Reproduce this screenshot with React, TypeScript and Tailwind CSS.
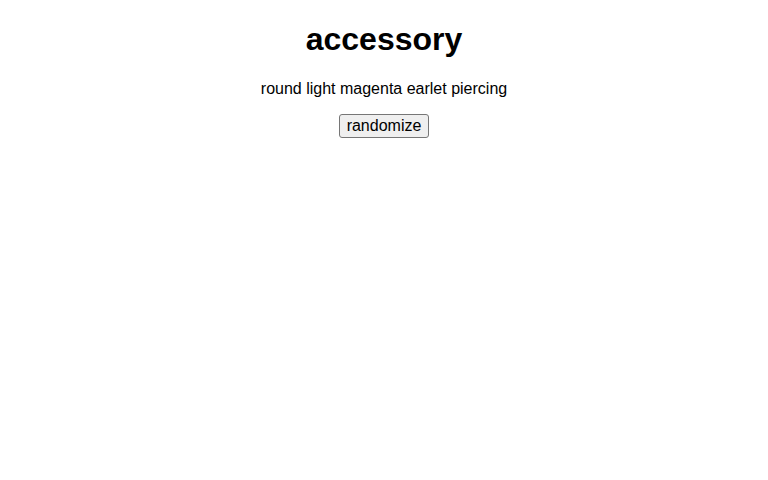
import React, { useState } from "react";

const items = [
  "round light magenta earlet piercing",
  "small silver hoop nose ring",
  "braided leather wrist band",
  "oval dark green brooch pin",
];

export default function App() {
  const [text, setText] = useState(items[0]);

  function randomize() {
    setText(items[Math.floor(Math.random() * items.length)]);
  }

  return (
    <div className="min-h-screen bg-white text-center text-black font-['Liberation_Sans',Arial,sans-serif] leading-[normal]">
      <div className="pt-[21.44px]">
        <h1 className="mb-[21.44px] text-[32px] font-bold leading-[normal]">accessory</h1>
        <p className="mb-4 text-base leading-[normal]">{text}</p>
        <button
          onClick={randomize}
          className="rounded-[3px] border border-[#767676] bg-[#efefef] px-[7px] py-[2px] text-base leading-[normal] hover:bg-[#e5e5e5]"
        >
          randomize
        </button>
      </div>
    </div>
  );
}
